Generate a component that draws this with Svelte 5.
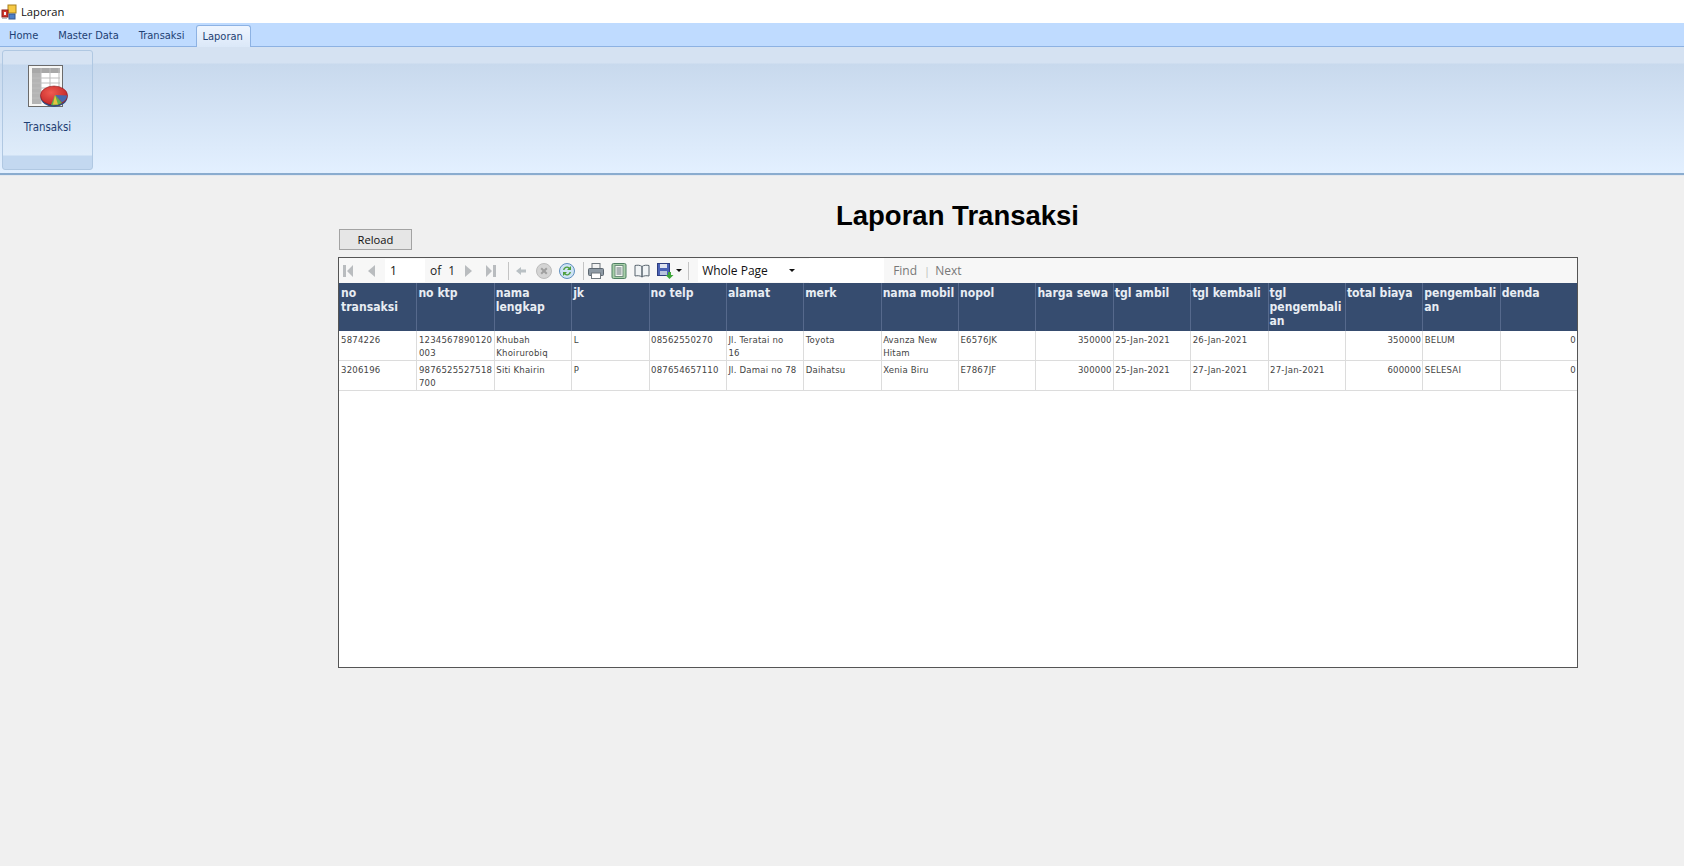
<script>
  const tabs = ['Home', 'Master Data', 'Transaksi', 'Laporan'];

  const columns = [
    { label: 'no transaksi' },
    { label: 'no ktp' },
    { label: 'nama lengkap' },
    { label: 'jk' },
    { label: 'no telp' },
    { label: 'alamat' },
    { label: 'merk' },
    { label: 'nama mobil' },
    { label: 'nopol' },
    { label: 'harga sewa', right: true },
    { label: 'tgl ambil' },
    { label: 'tgl kembali' },
    { label: 'tgl pengembalian' },
    { label: 'total biaya', right: true },
    { label: 'pengembalian' },
    { label: 'denda', right: true }
  ];

  const rows = [
    ['5874226', '1234567890120003', 'Khubah Khoirurobiq', 'L', '08562550270', 'Jl. Teratai no\n16', 'Toyota', 'Avanza New Hitam', 'E6576JK', '350000', '25-Jan-2021', '26-Jan-2021', '', '350000', 'BELUM', '0'],
    ['3206196', '9876525527518700', 'Siti Khairin', 'P', '087654657110', 'Jl. Damai no 78', 'Daihatsu', 'Xenia Biru', 'E7867JF', '300000', '25-Jan-2021', '27-Jan-2021', '27-Jan-2021', '600000', 'SELESAI', '0']
  ];
</script>

<div class="window">
  <header class="titlebar">
    <svg class="app-icon" width="16" height="16" viewBox="0 0 16 16" aria-hidden="true">
      <rect x="7" y="1" width="8" height="8" fill="#f6c945" stroke="#a8801c" />
      <rect x="1" y="6" width="6" height="7" fill="#d0342c" stroke="#8a1f1a" />
      <rect x="3" y="8" width="2" height="3" fill="#f4f4f4" />
      <rect x="8" y="10" width="6" height="5" fill="#4d7ec8" stroke="#34578f" />
      <rect x="1" y="14" width="5" height="1" fill="#bbb" />
    </svg>
    <span>Laporan</span>
  </header>

  <nav class="tabstrip">
    {#each tabs as tab}
      <span class="tab" class:active={tab === 'Laporan'}>{tab}</span>
    {/each}
  </nav>

  <section class="ribbon">
    <div class="panel">
      <div class="panel-body">
        <svg width="42" height="44" viewBox="0 0 42 44" aria-hidden="true">
          <defs>
            <radialGradient id="pie" cx="0.4" cy="0.35" r="0.8">
              <stop offset="0" stop-color="#ef5a50" />
              <stop offset="1" stop-color="#b91c1f" />
            </radialGradient>
          </defs>
          <rect x="2" y="2" width="34" height="41" fill="#8b8f93" opacity="0.45" />
          <rect x="1.5" y="1.500" width="34" height="41" fill="#f6f6f4" stroke="#6b6b6b" />
          <rect x="5" y="4" width="28" height="36" fill="#fff" />
          <rect x="5" y="4" width="28" height="5" fill="#a8a8a8" />
          <rect x="5" y="9" width="9" height="31" fill="#b4b4b4" />
          <path d="M5 14h28M5 19h28M5 24h28M5 29h28M5 34h28M14 4v36M23 4v36M32 4v36" stroke="#bdbdbd" fill="none" />
          <ellipse cx="27" cy="33" rx="13.5" ry="10" fill="#2f4f86" />
          <ellipse cx="27" cy="31.5" rx="13.5" ry="9.5" fill="url(#pie)" stroke="#8e1519" stroke-width="0.6" />
          <path d="M28 31 L40 31.5 A13 9 0 0 1 35 38.5 Z" fill="#4669ae" />
          <path d="M28 31 L35 39 A13 9 0 0 1 24 41 Z" fill="#5fb14a" />
          <path d="M28 31 L31 40.5 L26 40.5 Z" fill="#e6c33f" />
        </svg>
        <span class="panel-label">Transaksi</span>
      </div>
    </div>
  </section>

  <main class="content">
    <h1>Laporan Transaksi</h1>
    <button type="button" class="reload">Reload</button>

    <div class="viewer">
      <div class="toolbar">
        <span class="tool first">
          <svg width="14" height="14" viewBox="0 0 14 14"><path d="M2 1h3v12H2zM12 1v12L6 7z" fill="#b9bcbf" /></svg>
        </span>
        <span class="tool">
          <svg width="14" height="14" viewBox="0 0 14 14"><path d="M10 1v12L3 7z" fill="#b9bcbf" /></svg>
        </span>
        <span class="page-input">1</span>
        <span class="of">of</span>
        <span class="of-num">1</span>
        <span class="tool next">
          <svg width="14" height="14" viewBox="0 0 14 14"><path d="M4 1v12l7-6z" fill="#b9bcbf" /></svg>
        </span>
        <span class="tool">
          <svg width="14" height="14" viewBox="0 0 14 14"><path d="M2 1v12l6-6zM9 1h3v12H9z" fill="#b9bcbf" /></svg>
        </span>
        <i class="sep"></i>
        <span class="tool">
          <svg width="14" height="14" viewBox="0 0 14 14"><path d="M7 3v2.5h5v3H7V11L2 7z" fill="#b9c0c4" /></svg>
        </span>
        <span class="tool">
          <svg width="18" height="18" viewBox="0 0 18 18"><circle cx="9" cy="9" r="7.5" fill="#d4d4d4" stroke="#bcbcbc" /><path d="M6.2 6.2l5.6 5.6M11.8 6.2l-5.6 5.6" stroke="#9f9f9f" stroke-width="2" /></svg>
        </span>
        <span class="tool">
          <svg width="18" height="18" viewBox="0 0 18 18"><circle cx="9" cy="9" r="7.5" fill="#cfe3f5" stroke="#5f8fbe" /><path d="M5 8a4 4 0 0 1 6.5-2.5L13 4v4H9l1.5-1.5A2.4 2.4 0 0 0 6.5 8z" fill="#4e9f3d" /><path d="M13 10a4 4 0 0 1-6.5 2.5L5 14v-4h4l-1.5 1.5a2.4 2.4 0 0 0 4-1.5z" fill="#4e9f3d" /></svg>
        </span>
        <i class="sep mid"></i>
        <span class="tool">
          <svg width="18" height="18" viewBox="0 0 18 18"><rect x="5" y="1.5" width="8" height="5" fill="#f2f2f2" stroke="#70787f" /><rect x="1.5" y="6.5" width="15" height="7" rx="1" fill="#8d99a4" stroke="#5d6770" /><rect x="4.5" y="11" width="9" height="5.5" fill="#fff" stroke="#70787f" /></svg>
        </span>
        <span class="tool">
          <svg width="18" height="18" viewBox="0 0 18 18"><rect x="2" y="1.5" width="14" height="15" rx="1.5" fill="#a7cfa8" stroke="#4f7f63" /><rect x="5" y="3.5" width="8" height="11" fill="#f6f8f4" stroke="#6f8f7e" /><path d="M6.5 6h5M6.5 8h5M6.5 10h5M6.5 12h5" stroke="#5d6e74" /></svg>
        </span>
        <span class="tool">
          <svg width="18" height="16" viewBox="0 0 18 16"><path d="M9 3.5C7 2 4.5 2 2 2.5v10.5c2.500-.5 5-.5 7 1zM9 3.500C11 2 13.500 2 16 2.500v10.500c-2.500-.5-5-.5-7 1z" fill="#f1f4f6" stroke="#59656f" /></svg>
        </span>
        <span class="tool save">
          <svg width="18" height="18" viewBox="0 0 18 18"><rect x="1.500" y="1.500" width="12" height="12" fill="#4a62b5" stroke="#2e3e80" /><rect x="4" y="2" width="7" height="4" fill="#dfe4f0" /><rect x="4" y="9" width="7" height="4" fill="#b9c4de" /><path d="M11 13h2.500v-3h3v3H19l-4 4z" transform="translate(-1.500 0)" fill="#3ea63a" /></svg>
          <b class="caret small"></b>
        </span>
        <i class="sep wide"></i>
        <span class="zoom-select">Whole Page<b class="caret"></b></span>
        <span class="blank"></span>
        <span class="find">Find</span>
        <span class="find-sep">|</span>
        <span class="find next-link">Next</span>
      </div>

      <div class="report">
        <div class="grid head">
          {#each columns as col}
            <div class="th">{col.label}</div>
          {/each}
        </div>
        {#each rows as row}
          <div class="grid body-row">
            {#each row as value, i}
              <div class="td" class:right={columns[i].right}>{value}</div>
            {/each}
          </div>
        {/each}
      </div>
    </div>
  </main>
</div>

<style>
  :global(body) {
    background: #f0f0f0;
  }

  .window {
    height: 866px;
    overflow: hidden;
    display: flex;
    flex-direction: column;
    background: #f0f0f0;
    font-family: "Open Sans", "Noto Sans", sans-serif;
  }

  .titlebar {
    height: 23px;
    flex: none;
    display: flex;
    align-items: center;
    gap: 4px;
    padding-left: 1px;
    background: #fff;
    font-size: 11.2px;
    color: #111;
  }

  .app-icon {
    flex: none;
  }

  .tabstrip {
    height: 23px;
    flex: none;
    display: flex;
    align-items: flex-end;
    padding-left: 1px;
    background: #bfdbff;
    border-bottom: 1px solid #8db2e3;
    box-sizing: content-box;
  }

  .tab {
    height: 21px;
    padding: 0 8px;
    margin-right: 4px;
    font: 11px/22px "DejaVu Sans Condensed", "DejaVu Sans", sans-serif;
    color: #1e3f73;
  }

  .tab.active {
    height: 21px;
    margin: 0 0 -1px -1px;
    padding: 0 7px 0 6px;
    border: 1px solid #8db2e3;
    border-bottom: none;
    border-radius: 3px 3px 0 0;
    background: linear-gradient(#eef5ff, #dbe8f8);
  }

  .ribbon {
    height: 128px;
    flex: none;
    box-sizing: border-box;
    padding: 3px 0 0 2px;
    background: linear-gradient(#d5e2f2 0, #d5e2f2 16px, #c8d9ed 17px, #e3f0ff 100%);
    border-bottom: 2px solid #8aaccf;
    box-shadow: 0 1px 0 #e4e8ee;
  }

  .panel {
    width: 91px;
    height: 120px;
    box-sizing: border-box;
    border: 1px solid #b0c8e2;
    border-radius: 3px;
    background: linear-gradient(#d6e3f3 0, #d6e3f3 13px, #c5d8ee 14px, #dfecfa 104px, #c3d8f0 105px, #c3d8f0 100%);
  }

  .panel-body {
    display: flex;
    flex-direction: column;
    align-items: center;
    padding-top: 13px;
    gap: 11px;
  }

  .panel-label {
    font: 11.4px/16px "DejaVu Sans Condensed", "DejaVu Sans", sans-serif;
    color: #1e3f73;
  }

  .content {
    flex: 1;
    display: flex;
    flex-direction: column;
    padding: 27px 107px 0 338px;
  }

  h1 {
    margin: 0;
    height: 26px;
    text-align: center;
    font: bold 27.5px/28px "Liberation Sans", Arial, sans-serif;
    color: #000;
  }

  .reload {
    width: 73px;
    height: 21px;
    margin: 1px 0 7px 1px;
    padding: 0;
    border: 1px solid #a3a3a3;
    background: #e6e6e6;
    font: 11.2px "Open Sans", sans-serif;
    color: #111;
  }

  .viewer {
    width: 1240px;
    height: 411px;
    box-sizing: border-box;
    border: 1px solid #555;
    background: #fff;
  }

  .toolbar {
    height: 25px;
    display: flex;
    align-items: center;
    background: #f7f7f7;
    font-size: 12px;
    color: #222;
  }

  .tool {
    width: 23px;
    flex: none;
    display: flex;
    align-items: center;
    justify-content: center;
  }

  .tool.first {
    margin-left: -2px;
    margin-right: 1px;
    width: 22px;
  }

  .tool.next {
    margin-left: 1px;
  }

  .tool.save {
    width: 26px;
    gap: 2px;
    margin-left: 3px;
  }

  .sep {
    width: 1px;
    height: 18px;
    margin-left: 6px;
    background: #c4c4c4;
    flex: none;
  }

  .sep.mid {
    margin-left: 5px;
  }

  .sep.wide {
    margin-left: 6px;
  }

  .page-input {
    width: 40px;
    height: 23px;
    margin-left: 2px;
    line-height: 23px;
    padding-left: 5px;
    box-sizing: border-box;
    background: #fff;
    color: #111;
    font-size: 12px;
  }

  .of {
    margin-left: 5px;
  }

  .of-num {
    margin-left: 7px;
  }

  .zoom-select {
    width: 111px;
    height: 23px;
    margin-left: 9px;
    padding-left: 4px;
    box-sizing: border-box;
    display: flex;
    align-items: center;
    justify-content: space-between;
    padding-right: 14px;
    background: #fff;
    color: #111;
  }

  .caret {
    width: 0;
    height: 0;
    border: 3px solid transparent;
    border-top: 3px solid #111;
    border-bottom: none;
  }

  .blank {
    width: 75px;
    height: 25px;
    background: #fff;
    flex: none;
  }

  .find {
    margin-left: 9px;
    color: #777;
    font-size: 12px;
  }

  .find.next-link {
    margin-left: 5px;
  }

  .find-sep {
    margin-left: 7px;
    color: #bbb;
    font-size: 11px;
  }

  .grid {
    display: grid;
    grid-template-columns: repeat(16, 1fr);
  }

  .head {
    height: 48px;
    background: #364c6f;
  }

  .th {
    padding: 3px 0 0 1px;
    border-left: 1px solid #56698c;
    font: bold 12.1px/14px "DejaVu Sans Condensed", "DejaVu Sans", sans-serif;
    color: #e8edf3;
    overflow-wrap: anywhere;
  }

  .body-row {
    height: 30px;
    border-bottom: 1px solid #dcdcdc;
    box-sizing: border-box;
  }

  .td {
    padding: 2px 1px 0 1.5px;
    border-left: 1px solid #dcdcdc;
    font: 9.5px/13px "DejaVu Sans Condensed", "DejaVu Sans", sans-serif;
    letter-spacing: 0.2px;
    color: #444;
    overflow-wrap: anywhere;
    white-space: pre-line;
  }

  .td:first-child,
  .th:first-child {
    border-left: none;
    padding-left: 2px;
  }

  .td.right {
    text-align: right;
  }
</style>
